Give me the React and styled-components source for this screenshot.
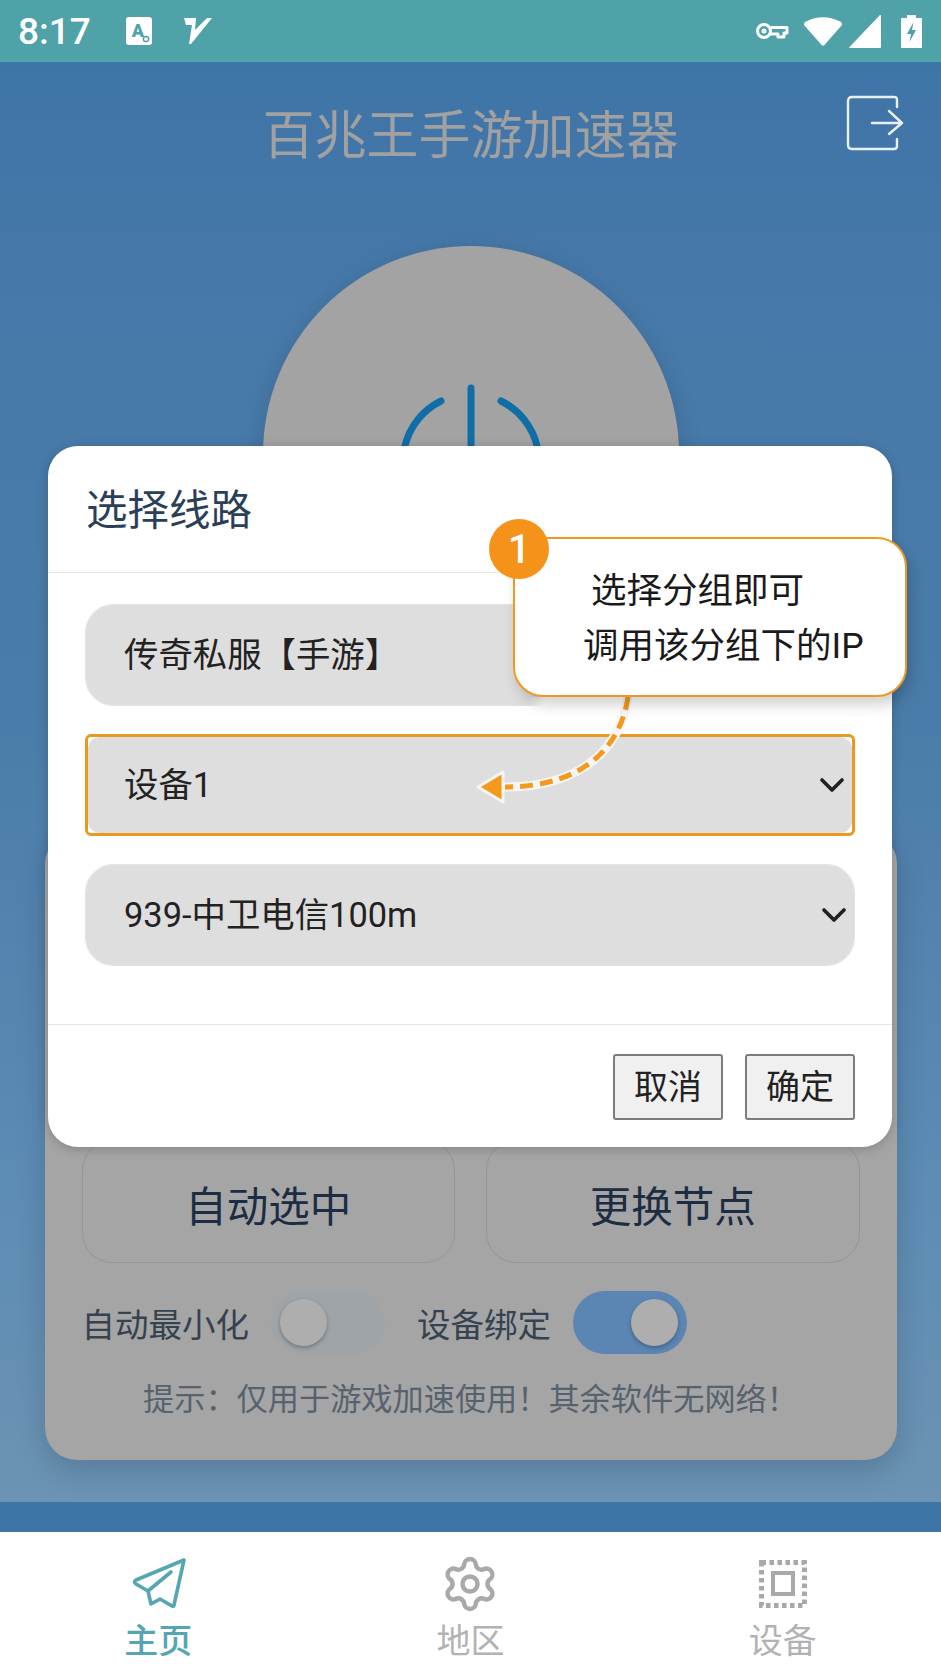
import React from "react";
import styled, { createGlobalStyle } from "styled-components";
import { ChevronDown, Settings } from "lucide-react";

const FONT = `Roboto, "Noto Sans CJK SC", sans-serif`;

const GlobalStyle = createGlobalStyle`
  html, body {
    margin: 0;
    padding: 0;
    background: #fff;
  }
  * {
    box-sizing: border-box;
  }
`;

const App = () => {
  return (
    <Screen>
      <GlobalStyle />
      <StatusBar>
        <StatusGroup $gap={31}>
          <Clock>8:17</Clock>
          <NoticeA />
          <NoticeV />
        </StatusGroup>
        <StatusGroup $gap={7}>
          <KeyIcon />
          <WifiIcon />
          <SignalIcon />
          <BatteryIcon />
        </StatusGroup>
      </StatusBar>

      <Stage>
        <Header>
          <span />
          <Title>百兆王手游加速器</Title>
          <LogoutIcon />
        </Header>

        <PowerButton>
          <PowerIcon />
        </PowerButton>

        <Panel>
          <ActionRow>
            <ActionButton>自动选中</ActionButton>
            <ActionButton>更换节点</ActionButton>
          </ActionRow>
          <ToggleRow>
            <ToggleGroup>
              <ToggleLabel>自动最小化</ToggleLabel>
              <Toggle />
            </ToggleGroup>
            <ToggleGroup>
              <ToggleLabel>设备绑定</ToggleLabel>
              <Toggle $on />
            </ToggleGroup>
          </ToggleRow>
          <Hint>提示：仅用于游戏加速使用！其余软件无网络！</Hint>
        </Panel>
      </Stage>

      <Band />

      <BottomNav>
        <NavItem $active>
          <NavIcon>
            <PlaneIcon />
          </NavIcon>
          <NavLabel $active>主页</NavLabel>
        </NavItem>
        <NavItem>
          <NavIcon>
            <Settings size={60} strokeWidth={1.8} color="#a9a9a9" />
          </NavIcon>
          <NavLabel>地区</NavLabel>
        </NavItem>
        <NavItem>
          <NavIcon>
            <DeviceIcon />
          </NavIcon>
          <NavLabel>设备</NavLabel>
        </NavItem>
      </BottomNav>

      <Dialog>
        <DialogHead>选择线路</DialogHead>
        <DialogBody>
          <SelectBox>
            <span>传奇私服【手游】</span>
            <SelectChevron />
          </SelectBox>
          <SelectBox $marked>
            <span>设备1</span>
            <SelectChevron />
          </SelectBox>
          <SelectBox>
            <span>939-中卫电信100m</span>
            <SelectChevron />
          </SelectBox>
        </DialogBody>
        <DialogFoot>
          <DialogButton>取消</DialogButton>
          <DialogButton>确定</DialogButton>
        </DialogFoot>
        <SelectMask />
      </Dialog>

      <ArrowDrawing />

      <Callout>
        <Badge>1</Badge>
        <CalloutLine $indent={8}>选择分组即可</CalloutLine>
        <CalloutLine>调用该分组下的IP</CalloutLine>
      </Callout>
    </Screen>
  );
};

const SelectChevron = () => (
  <ChevronBox>
    <ChevronDown size={40} strokeWidth={2.2} />
  </ChevronBox>
);

const NoticeA = () => (
  <svg width="26" height="28" viewBox="0 0 26 28">
    <rect width="26" height="28" rx="3" fill="#fff" />
    <text x="12" y="20" fontSize="18" fontWeight="900" textAnchor="middle" fill="#4fa3a8" fontFamily="Roboto, sans-serif">
      A
    </text>
    <circle cx="20" cy="22" r="2.6" fill="#fff" stroke="#4fa3a8" strokeWidth="1.5" />
  </svg>
);

const NoticeV = () => (
  <svg width="30" height="28" viewBox="0 0 30 28">
    <path d="M1 1 H13 L12 13 L24 1 H29 L8 27 H6 L9 8 L3 8 Z" fill="#fff" />
  </svg>
);

const KeyIcon = () => (
  <KeySvg width="34" height="20" viewBox="0 0 34 20" fill="none" stroke="#fff" strokeWidth="3">
    <circle cx="9" cy="10" r="6.5" />
    <circle cx="9" cy="10" r="1.5" strokeWidth="2" />
    <path d="M15.5 6.5 H32 V12 H29 V16 H23 V13 H15.5" strokeLinejoin="round" />
  </KeySvg>
);

const WifiIcon = () => (
  <svg width="38" height="30" viewBox="0 0 40 30" preserveAspectRatio="none">
    <path d="M0 9 Q-0.5 7 2 5.5 Q20 -3 38 5.5 Q40.5 7 40 9 L21.5 29 Q20 30.5 18.5 29 Z" fill="#fff" />
  </svg>
);

const SignalIcon = () => (
  <svg width="32" height="33" viewBox="0 0 32 33">
    <path d="M31 0 Q32 0 32 1 V32 Q32 33 31 33 H1 Q-0.5 33 0.5 32 Z" fill="#fff" />
  </svg>
);

const BatteryIcon = () => (
  <BatterySvg width="21" height="33" viewBox="0 0 21 33">
    <path d="M6 0 H15 V3 H21 V33 H0 V3 H6 Z" fill="#fff" />
    <path d="M12.5 7 L6 19 H10 L8.5 27 L15 15 H11 Z" fill="#4fa3a8" />
  </BatterySvg>
);

const LogoutIcon = () => (
  <LogoutSvg width="58" height="56" viewBox="0 0 58 56" fill="none" stroke="#e9f0f5" strokeWidth="2.4" strokeLinecap="round" strokeLinejoin="round">
    <path d="M51 12 V5 Q51 2 48 2 H6 Q2 2 2 6 V50 Q2 54 6 54 H48 Q51 54 51 51 V44" />
    <path d="M26 28 H56 M43 16 L56 28 L43 39" />
  </LogoutSvg>
);

const PowerIcon = () => (
  <svg width="160" height="160" viewBox="0 0 160 160" fill="none" stroke="#0e6ea5" strokeWidth="7" strokeLinecap="round">
    <path d="M50 18 A68 68 0 1 0 110 18" />
    <path d="M80 5 V80" />
  </svg>
);

const PlaneIcon = () => (
  <svg width="58" height="52" viewBox="0 0 58 52" fill="none" stroke="#55a6b2" strokeWidth="3.6" strokeLinejoin="round" strokeLinecap="round">
    <path d="M55 2 L7 22 Q4 24 7 26 L19 33 L22 46 L31 41 L43 48 Q45 49 45 47 Z" />
    <path d="M19 33 L42 14" />
  </svg>
);

const DeviceIcon = () => (
  <svg width="48" height="48" viewBox="0 0 48 48" fill="none" stroke="#a9a9a9">
    <rect x="2.5" y="2.5" width="43" height="43" strokeWidth="5" strokeDasharray="4.5 3.5" />
    <rect x="14" y="13" width="20" height="21" strokeWidth="4" />
  </svg>
);

const ArrowDrawing = () => (
  <ArrowSvg width="170" height="120" viewBox="0 0 170 120" fill="none">
    <path d="M153 2 C146 50 110 92 30 92" stroke="#f5f5f5" strokeWidth="9" strokeLinecap="round" />
    <path d="M3 92 L28 77 V107 Z" fill="#f39a1d" stroke="#f5f5f5" strokeWidth="3" strokeLinejoin="round" />
    <path d="M153 2 C146 50 110 92 30 92" stroke="#f39a1d" strokeWidth="5" strokeDasharray="13 7" />
  </ArrowSvg>
);

const Screen = styled.div`
  position: relative;
  display: flex;
  flex-direction: column;
  width: 941px;
  height: 1672px;
  overflow: hidden;
  font-family: ${FONT};
`;

const StatusBar = styled.div`
  display: flex;
  align-items: center;
  justify-content: space-between;
  height: 62px;
  padding: 0 19px 0 18px;
  background: #4fa3a8;
`;

const StatusGroup = styled.div`
  display: flex;
  align-items: center;
  gap: ${(p) => p.$gap}px;
`;

const Clock = styled.span`
  margin-right: 4px;
  color: #fff;
  font-size: 37px;
  font-weight: 500;
  line-height: 1;
`;

const KeySvg = styled.svg`
  margin-right: 8px;
`;

const BatterySvg = styled.svg`
  margin-left: 13px;
`;

const Stage = styled.div`
  flex: 1;
  display: flex;
  flex-direction: column;
  align-items: center;
  padding-top: 38px;
  background: linear-gradient(#3f74a8 0%, #4679a9 15%, #4a7ca9 45%, #5b8bb4 75%, #6b93b4 100%);
`;

const Header = styled.div`
  display: grid;
  grid-template-columns: 1fr auto 1fr;
  width: 100%;
  height: 70px;
  padding: 0 37px;
`;

const Title = styled.h1`
  margin: 0;
  padding-top: 2px;
  color: #a1a1a1;
  font-size: 52px;
  font-weight: 400;
  line-height: 70px;
`;

const LogoutSvg = styled.svg`
  justify-self: end;
  margin-top: -5px;
`;

const PowerButton = styled.div`
  display: flex;
  justify-content: center;
  flex-shrink: 0;
  width: 416px;
  height: 416px;
  margin-top: 76px;
  padding-top: 137px;
  border-radius: 50%;
  background: #a3a3a3;
  box-shadow: 0 6px 26px rgba(0, 0, 0, 0.14);
`;

const Panel = styled.section`
  width: 852px;
  margin-top: 170px;
  /* upper part of the card is covered by the dialog */
  padding: 308px 37px 40px;
  border-radius: 32px;
  background: #a5a5a5;
  box-shadow: 0 10px 30px rgba(0, 0, 0, 0.16);
`;

const ActionRow = styled.div`
  display: grid;
  grid-template-columns: 1fr 1fr;
  gap: 31px;
`;

const ActionButton = styled.div`
  display: flex;
  align-items: center;
  justify-content: center;
  height: 123px;
  padding-top: 4px;
  border: 1px solid #959595;
  border-radius: 30px;
  color: #1c2c42;
  font-size: 41.5px;
`;

const ToggleRow = styled.div`
  display: flex;
  gap: 32px;
  margin-top: 28px;
`;

const ToggleGroup = styled.div`
  display: flex;
  align-items: center;
  gap: 22px;
`;

const ToggleLabel = styled.span`
  color: #36424f;
  font-size: 33.5px;
`;

const Toggle = styled.div`
  display: flex;
  align-items: center;
  justify-content: ${(p) => (p.$on ? "flex-end" : "flex-start")};
  width: 114px;
  height: 63px;
  padding: 0 9px;
  border-radius: 32px;
  background: ${(p) => (p.$on ? "#5b86b3" : "#9fa4a9")};

  &::after {
    content: "";
    width: 47px;
    height: 47px;
    border-radius: 50%;
    background: #aeaeae;
    box-shadow: 0 2px 4px rgba(0, 0, 0, 0.28);
  }
`;

const Hint = styled.p`
  margin: 26px 0 0;
  color: #56626e;
  font-size: 31.2px;
  line-height: 40px;
  text-align: center;
`;

const Band = styled.div`
  flex-shrink: 0;
  height: 30px;
  background: #3f74a8;
`;

const BottomNav = styled.nav`
  display: grid;
  grid-template-columns: repeat(3, 1fr);
  flex-shrink: 0;
  height: 140px;
  padding: 22px 2px 0;
  background: #fff;
`;

const NavItem = styled.div`
  display: flex;
  flex-direction: column;
  align-items: center;
  color: ${(p) => (p.$active ? "#55a6b2" : "#b2b2b2")};
`;

const NavIcon = styled.div`
  display: flex;
  align-items: center;
  justify-content: center;
  height: 60px;
`;

const NavLabel = styled.span`
  margin-top: 4px;
  font-size: 34px;
  font-weight: ${(p) => (p.$active ? 500 : 400)};
  line-height: 46px;
`;

const Dialog = styled.div`
  position: absolute;
  top: 446px;
  left: 48px;
  display: flex;
  flex-direction: column;
  width: 844px;
  height: 701px;
  border-radius: 30px;
  background: #fff;
  box-shadow: 0 2px 12px rgba(0, 0, 0, 0.2);
`;

const DialogHead = styled.div`
  display: flex;
  align-items: center;
  height: 127px;
  padding: 0 0 4px 38px;
  border-bottom: 1px solid #e6e6e6;
  color: #2b3f58;
  font-size: 41.5px;
`;

const DialogBody = styled.div`
  display: flex;
  flex-direction: column;
  gap: 28px;
  height: 452px;
  padding: 31px 37px 0;
  border-bottom: 1px solid #e6e6e6;
`;

const SelectBox = styled.div`
  position: relative;
  isolation: isolate;
  display: flex;
  align-items: center;
  justify-content: space-between;
  height: 102px;
  padding: ${(p) => (p.$marked ? "0 0 6px 36px" : "0 0 6px 38px")};
  border: ${(p) => (p.$marked ? "3px solid #e89a1e" : "1px solid #e3e3e3")};
  border-radius: ${(p) => (p.$marked ? "6px" : "28px")};
  color: #222;
  font-size: 34.4px;

  /* grey fill keeps its own rounded corners inside the square marker */
  &::before {
    content: "";
    position: absolute;
    inset: 0;
    z-index: -1;
    border-radius: ${(p) => (p.$marked ? "12px" : "27px")};
    background: #dedede;
  }
`;

const ChevronBox = styled.span`
  display: flex;
  margin-top: 6px;
`;

/* the annotation clears the first select's lower right edge */
const SelectMask = styled.div`
  position: absolute;
  top: 251px;
  left: 480px;
  width: 334px;
  height: 12px;
  background: linear-gradient(90deg, rgba(255, 255, 255, 0), #fff 16px);
`;

const DialogFoot = styled.div`
  display: flex;
  justify-content: flex-end;
  gap: 22px;
  padding: 29px 37px 0;
`;

const DialogButton = styled.div`
  display: flex;
  align-items: center;
  justify-content: center;
  width: 110px;
  height: 66px;
  padding-bottom: 6px;
  border: 2px solid #7c7c7c;
  border-radius: 3px;
  background: #f0f0f0;
  color: #222;
  font-size: 34px;
`;

const ArrowSvg = styled.svg`
  position: absolute;
  top: 695px;
  left: 475px;
`;

const Callout = styled.div`
  position: absolute;
  top: 537px;
  left: 513px;
  width: 394px;
  height: 160px;
  padding: 25px 0 0 68px;
  border: 2.5px solid #ee9a22;
  border-radius: 30px;
  background: #fff;
  box-shadow: 4px 8px 14px rgba(0, 0, 0, 0.18);
`;

const Badge = styled.div`
  position: absolute;
  top: -20px;
  left: -26px;
  display: flex;
  align-items: center;
  justify-content: center;
  width: 60px;
  height: 60px;
  border-radius: 50%;
  background: #f5921a;
  color: #fff;
  font-size: 40px;
  font-weight: 500;
`;

const CalloutLine = styled.div`
  margin-left: ${(p) => p.$indent || 0}px;
  color: #1a1a1a;
  font-size: 35.5px;
  line-height: 55px;
  white-space: nowrap;
`;

export default App;
